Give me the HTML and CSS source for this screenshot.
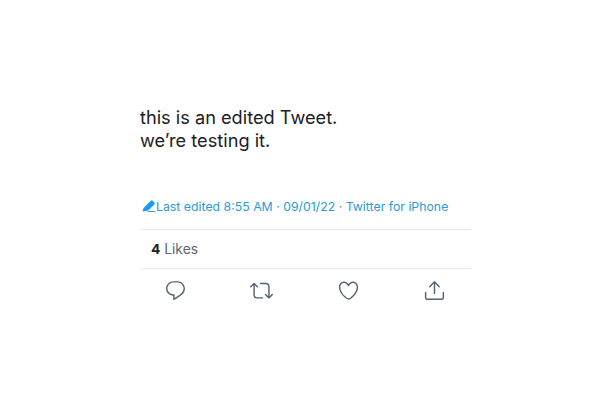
FILE: index.html
```html
<!DOCTYPE html>
<html lang="en">
<head>
<meta charset="utf-8">
<title>Edited Tweet</title>
<link rel="stylesheet" href="styles.css">
</head>
<body>
<main class="tweet">
  <p class="text">this is an edited Tweet.<br>we’re testing it.</p>
  <div class="meta">
    <svg class="pen" viewBox="0 0 15 13"><path d="M9.4.9a1.6 1.6 0 0 1 2.2 0l1.7 1.7a1.6 1.6 0 0 1 0 2.2L6.6 11.4 1.3 12.4.6 11.7 1.6 8.6z"/><path d="M6 12h8.5v1H6z"/></svg>
    <span>Last edited 8:55 AM · 09/01/22 · Twitter for iPhone</span>
  </div>
  <div class="likes"><b>4</b> Likes</div>
  <div class="actions">
    <svg class="icon" viewBox="0 0 24 24"><path d="M14.046 2.242l-4.148-.01h-.002c-4.374 0-7.8 3.427-7.8 7.802 0 4.098 3.186 7.206 7.465 7.37v3.828c0 .108.044.286.12.403.142.225.384.347.632.347.138 0 .277-.038.402-.118.264-.168 6.473-4.14 8.088-5.506 1.902-1.61 3.04-3.97 3.043-6.312v-.017c-.006-4.367-3.43-7.787-7.8-7.788zm3.787 12.972c-1.134.96-4.862 3.405-6.772 4.643V16.67c0-.414-.335-.75-.75-.75h-.396c-3.66 0-6.318-2.476-6.318-5.886 0-3.534 2.768-6.302 6.3-6.302l4.147.01h.002c3.532 0 6.3 2.766 6.302 6.296-.003 1.91-.942 3.844-2.514 5.176z"/></svg>
    <svg class="icon" viewBox="0 0 24 24"><path d="M23.77 15.67c-.292-.293-.767-.293-1.06 0l-2.22 2.22V7.65c0-2.068-1.683-3.75-3.75-3.75h-5.85c-.414 0-.75.336-.75.75s.336.75.75.75h5.85c1.24 0 2.25 1.01 2.25 2.25v10.24l-2.22-2.22c-.293-.293-.768-.293-1.06 0s-.294.768 0 1.06l3.5 3.5c.145.147.337.22.53.22s.383-.072.53-.22l3.5-3.5c.294-.292.294-.767 0-1.06zm-10.66 3.28H7.26c-1.24 0-2.25-1.01-2.25-2.25V6.46l2.22 2.22c.148.147.34.22.532.22s.384-.073.53-.22c.293-.293.293-.768 0-1.06l-3.5-3.5c-.293-.294-.768-.294-1.06 0l-3.5 3.5c-.294.292-.294.767 0 1.06s.767.293 1.06 0l2.22-2.22V16.7c0 2.068 1.683 3.75 3.75 3.75h5.85c.414 0 .75-.336.75-.75s-.337-.75-.75-.75z"/></svg>
    <svg class="icon" viewBox="0 0 24 24"><path d="M12 21.638h-.014C9.403 21.59 1.95 14.856 1.95 8.478c0-3.064 2.525-5.754 5.403-5.754 2.29 0 3.83 1.58 4.646 2.73.814-1.148 2.354-2.73 4.645-2.73 2.88 0 5.404 2.69 5.404 5.755 0 6.376-7.454 13.11-10.037 13.157H12zM7.354 4.225c-2.08 0-3.903 1.988-3.903 4.255 0 5.74 7.034 11.596 8.55 11.658 1.518-.062 8.55-5.917 8.55-11.658 0-2.267-1.823-4.255-3.903-4.255-2.528 0-3.94 2.936-3.952 2.965-.23.562-1.156.562-1.387 0-.015-.03-1.426-2.965-3.955-2.965z"/></svg>
    <svg class="icon" viewBox="0 0 24 24"><path d="M17.53 7.47l-5-5c-.293-.293-.768-.293-1.06 0l-5 5c-.294.293-.294.768 0 1.06s.767.294 1.06 0l3.72-3.72V15c0 .414.336.75.75.75s.75-.336.75-.75V4.81l3.72 3.72c.146.147.338.22.53.22s.384-.072.53-.22c.293-.293.293-.767 0-1.06z"/><path d="M19.708 21.944H4.292C3.028 21.944 2 20.916 2 19.652V14c0-.414.336-.75.75-.75s.75.336.75.75v5.652c0 .437.355.792.792.792h15.416c.437 0 .792-.355.792-.792V14c0-.414.336-.75.75-.75s.75.336.75.75v5.652c0 1.264-1.028 2.292-2.292 2.292z"/></svg>
  </div>
</main>
</body>
</html>
```

FILE: styles.css
```css
html, body {
  margin: 0;
  background: #fff;
}
.tweet {
  width: 331px;
  margin-left: 140px;
  padding-top: 106px;
  font-family: Inter, Roboto, sans-serif;
}
.text {
  margin: 0;
  font-size: 18.2px;
  line-height: 23px;
  color: #1b2025;
}
.meta {
  display: flex;
  align-items: center;
  margin-top: 44px;
  padding-left: 2px;
  height: 20px;
  font-size: 12.3px;
  color: #2a9bd3;
}
.pen {
  width: 14px;
  height: 12px;
  fill: #1d9bf0;
}
.likes {
  margin-top: 13px;
  padding: 10px 0 10px 11px;
  border-top: 1px solid #e9ecee;
  border-bottom: 1px solid #e9ecee;
  font-size: 13.8px;
  line-height: 18px;
  color: #5b6670;
}
.likes b {
  color: #1b2025;
  font-weight: 700;
}
.actions {
  display: flex;
  justify-content: space-between;
  padding: 10px 25px 0 24px;
}
.icon {
  width: 23px;
  height: 23px;
  fill: #536471;
}
```
